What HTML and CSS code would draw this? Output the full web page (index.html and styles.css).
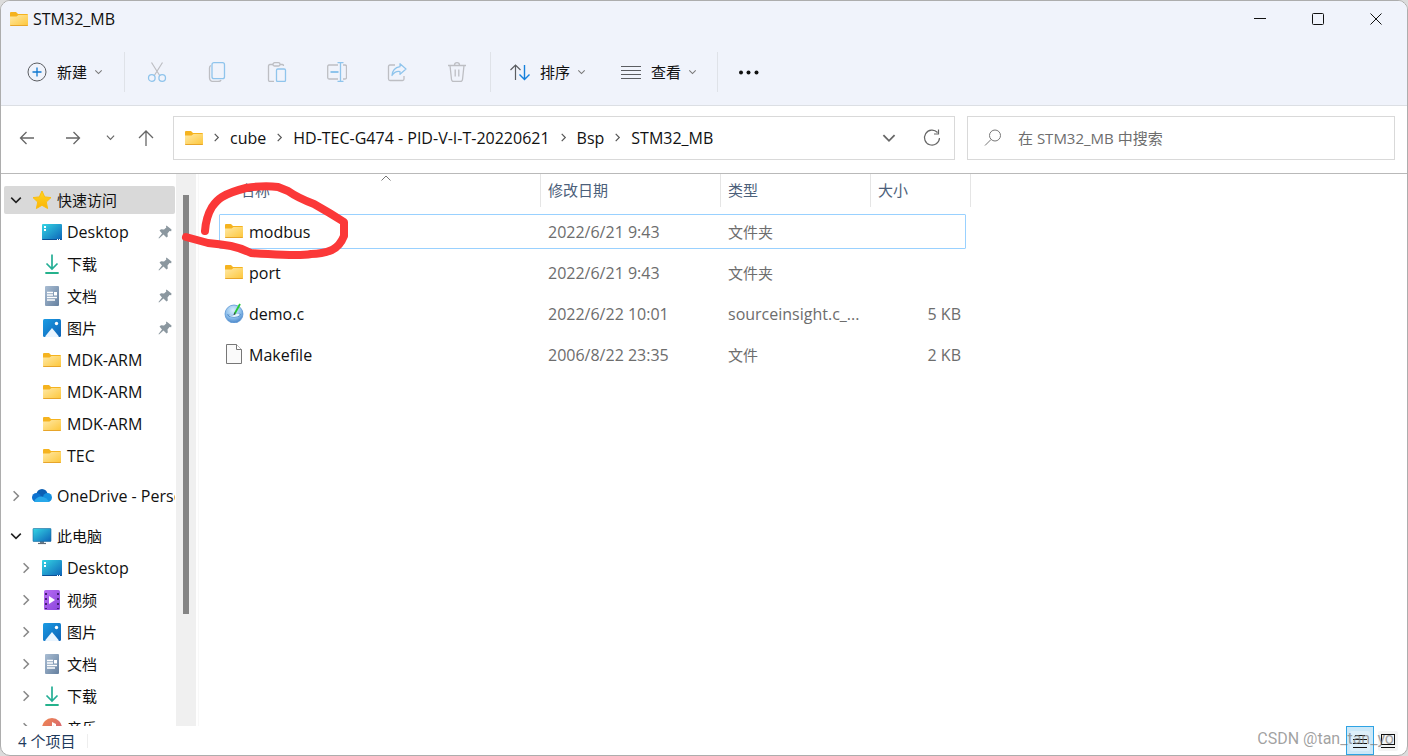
FILE: index.html
```html
<!DOCTYPE html>
<html lang="zh-CN">
<head>
<meta charset="utf-8">
<title>STM32_MB</title>
<link rel="stylesheet" href="styles.css">
</head>
<body>
<svg class="defs" aria-hidden="true">
  <defs>
    <linearGradient id="g-folder" x1="0" y1="0" x2="1" y2="1"><stop offset="0" stop-color="#ffe9a6"/><stop offset="1" stop-color="#fdc639"/></linearGradient>
    <linearGradient id="g-screen" x1="0" y1="0" x2="1" y2="1"><stop offset="0" stop-color="#35d6e4"/><stop offset="1" stop-color="#0d63b8"/></linearGradient>
    <linearGradient id="g-doc" x1="0" y1="0" x2="1" y2="1"><stop offset="0" stop-color="#a9bdd3"/><stop offset="1" stop-color="#65809f"/></linearGradient>
    <linearGradient id="g-pic" x1="0" y1="0" x2="1" y2="1"><stop offset="0" stop-color="#1b9ce4"/><stop offset="1" stop-color="#0e62b6"/></linearGradient>
    <linearGradient id="g-video" x1="0" y1="0" x2="1" y2="1"><stop offset="0" stop-color="#b76cf3"/><stop offset="1" stop-color="#8a44dc"/></linearGradient>
    <linearGradient id="g-music" x1="0" y1="0" x2="1" y2="1"><stop offset="0" stop-color="#f0894f"/><stop offset="1" stop-color="#cf5a7e"/></linearGradient>
    <linearGradient id="g-star" x1="0" y1="0" x2="0" y2="1"><stop offset="0" stop-color="#ffd61f"/><stop offset="1" stop-color="#fbb40a"/></linearGradient>
    <radialGradient id="g-ball" cx=".45" cy=".3" r=".7"><stop offset="0" stop-color="#d9eefd"/><stop offset=".6" stop-color="#8ec0ec"/><stop offset="1" stop-color="#4a86c9"/></radialGradient>
  </defs>
  <symbol id="folder" viewBox="0 0 20 20"><path d="M1 4q0-1 1-1h5l2 2h9q1 0 1 1v3H1z" fill="#f5b31f"/><path d="M1 7.500h6.500l2-1.500H19v10q0 1-1 1H2q-1 0-1-1z" fill="url(#g-folder)"/><path d="M1 16q0 1 1 1h16q1 0 1-1z" fill="#e7a52a"/></symbol>
  <symbol id="desktop" viewBox="0 0 20 20"><rect y="2" width="20" height="16" rx="1" fill="url(#g-screen)"/><path d="M0 17h20q0 1-1 1H1q-1 0-1-1z" fill="#0b4f96"/><path d="M2 4h2v2H2zM2 7h2v2H2zM15 17h1v1h-1zM17 17h1v1h-1z" fill="#fff"/></symbol>
  <symbol id="download" viewBox="0 0 20 20"><path d="M10 .5V15M4.500 9.500 10 15l5.500-5.500" fill="none" stroke="#24ae95" stroke-width="1.700"/><path d="M4 19h12" stroke="#25b28c" stroke-width="1.800" stroke-linecap="round"/></symbol>
  <symbol id="document" viewBox="0 0 20 20"><rect x="3" y="0" width="14" height="20" rx="1" fill="url(#g-doc)"/><path d="M5 6.500h6M5 9h6M5 11.500h10M5 14h8" stroke="#fff" stroke-width="1.300"/><path d="M12 6h3v3.500h-3z" fill="#fff"/></symbol>
  <symbol id="picture" viewBox="0 0 20 20"><rect x="1" y="1" width="18" height="18" rx="1.500" fill="url(#g-pic)"/><path d="M3 18.500 10 10l7 8.500q-1 .5-2 .5H5q-1 0-2-.5z" fill="#eaf5ff"/><circle cx="14.500" cy="5.500" r="1.700" fill="#fff"/></symbol>
  <symbol id="video" viewBox="0 0 20 20"><rect x="2" y="0" width="16" height="20" rx="1.500" fill="url(#g-video)"/><path d="M4 3v16M16 3v16" stroke="#472178" stroke-width="2" stroke-dasharray="2 3"/><path d="M7 6v8l6-4z" fill="#fff"/></symbol>
  <symbol id="music" viewBox="0 0 20 20"><circle cx="10" cy="10" r="10" fill="url(#g-music)"/><path d="M10 14V4l4 2v3l-2.500-1.500V14z" fill="#fff"/><circle cx="9" cy="14" r="2.500" fill="#fff"/></symbol>
  <symbol id="pc" viewBox="0 0 20 20"><path d="M8 15h4v2.500H8z" fill="#6e7f8e"/><path d="M6 17.500h8" stroke="#5f6c78" stroke-width="1.200"/><rect x="1" y="2.500" width="18" height="13" rx=".5" fill="url(#g-screen)" stroke="#1d6c9d" stroke-width=".6"/></symbol>
  <symbol id="star" viewBox="0 0 20 20"><path d="m10 1 2.700 5.900 6.300.7-4.700 4.400 1.300 6.500L10 15.300 4.400 18.500 5.700 12 1 7.600l6.300-.7z" fill="url(#g-star)" stroke="#fbbd0e" stroke-linejoin="round"/></symbol>
  <symbol id="cloud" viewBox="0 0 20 20"><circle cx="10" cy="8.500" r="5.500" fill="#0a5fb4"/><circle cx="4.500" cy="11.500" r="4.500" fill="#0d72cf"/><circle cx="15.500" cy="11.500" r="4.500" fill="#1490df"/><path d="M2 15.500Q5 10 10 10.500q4 1 7.500 5-1 .5-2 .5h-11q-1.500 0-2.500-.5z" fill="#28a8ea"/></symbol>
  <symbol id="pin" viewBox="0 0 14 14"><path d="M8.500.5 13.500 4.500l-.3 1.700-1.700-.2L9.500 8.500l.3 3L8.500 12.500 5.500 9.500 1 13.500l-.5-.5L4 8.500 1.500 5.500 3 4.300l3 .2L8.300 2.500 8 1.200z" fill="#8b979f"/></symbol>
  <symbol id="right" viewBox="0 0 10 10"><path d="m3 1 4 4-4 4" fill="none" stroke="currentColor" stroke-width="1.300"/></symbol>
  <symbol id="down" viewBox="0 0 10 10"><path d="m1 3 4 4 4-4" fill="none" stroke="currentColor" stroke-width="1.300"/></symbol>
</svg>

<div class="window">
  <header class="titlebar">
    <svg class="ico"><use href="#folder"/></svg>
    <h1 class="title">STM32_MB</h1>
    <div class="captions">
      <button class="caption" aria-label="最小化"><svg viewBox="0 0 12 12"><path d="M0 5.500h12" stroke="#111"/></svg></button>
      <button class="caption" aria-label="最大化"><svg viewBox="0 0 12 12"><rect x=".5" y=".5" width="11" height="11" rx="1" fill="none" stroke="#111"/></svg></button>
      <button class="caption" aria-label="关闭"><svg viewBox="0 0 12 12"><path d="m.5.5 11 11M11.500.5l-11 11" stroke="#111"/></svg></button>
    </div>
  </header>

  <div class="toolbar">
    <button class="tool zh"><svg class="ico" viewBox="0 0 20 20" fill="none"><circle cx="10" cy="10" r="9" stroke="#5b5d61"/><path d="M10 5.500v9M5.500 10h9" stroke="#0f78d0" stroke-width="1.300"/></svg><span>新建</span><svg class="chev"><use href="#down"/></svg></button>
    <i class="sep sep-new"></i>
    <div class="actions">
      <button class="action" aria-label="剪切" disabled><svg class="ico" viewBox="0 0 20 20" fill="none"><path d="M4.500.5 13 14M15.500.5 7 14" stroke="#bdbec3" stroke-width="1.200"/><circle cx="4.800" cy="16" r="3.300" stroke="#8fc4ec" stroke-width="1.300"/><circle cx="15.200" cy="16" r="3.300" stroke="#8fc4ec" stroke-width="1.300"/></svg></button>
      <button class="action" aria-label="复制" disabled><svg class="ico" viewBox="0 0 20 20" fill="none"><path d="M4 3.500Q2.500 4 2.500 6v9.500q0 4 4 4H11q2.500 0 3-1.500" stroke="#bdbec3" stroke-width="1.300"/><rect x="5" y=".7" width="12.500" height="16" rx="2" stroke="#8fc4ec" stroke-width="1.300"/></svg></button>
      <button class="action" aria-label="粘贴" disabled><svg class="ico" viewBox="0 0 20 20" fill="none"><path d="M6 2.500H3q-1.500 0-1.500 1.500v14q0 1.500 1.500 1.500h4M13 2.500h2.500Q16.500 2.500 16.500 4" stroke="#bdbec3" stroke-width="1.300"/><rect x="6" y=".7" width="7" height="3.300" rx="1.600" stroke="#bdbec3" stroke-width="1.300"/><rect x="9.500" y="7" width="9" height="12.500" rx="1.300" stroke="#8fc4ec" stroke-width="1.300"/></svg></button>
      <button class="action" aria-label="重命名" disabled><svg class="ico" viewBox="0 0 20 20" fill="none"><path d="M11 3H2Q.7 3 .7 4.500v11Q.7 17 2 17h9M16 3h2q1.500 0 1.500 1.500v11Q19.500 17 18 17h-2" stroke="#bdbec3" stroke-width="1.300"/><path d="M13.500.7v18.600M10.500.7h6M10.500 19.300h6" stroke="#8fc4ec" stroke-width="1.300"/><path d="M3.500 10h8" stroke="#8fc4ec" stroke-width="2"/></svg></button>
      <button class="action" aria-label="共享" disabled><svg class="ico" viewBox="0 0 20 20" fill="none"><path d="M8 3H3Q1.500 3 1.500 4.500v12.500q0 1.500 1.500 1.500h12.500q1.500 0 1.500-1.500v-3" stroke="#bdbec3" stroke-width="1.300"/><path d="m13 1.700 6 5.300-6 5.300V9.500q-5-.8-8 4Q5.500 6 13 4.700z" stroke="#8fc4ec" stroke-width="1.200" stroke-linejoin="round"/></svg></button>
      <button class="action" aria-label="删除" disabled><svg class="ico" viewBox="0 0 20 20" fill="none"><path d="M1 3.500h18M3 3.500l1.500 14q.2 2 2 2h7q1.800 0 2-2L17 3.500M7.500 3Q7.500.7 10 .7T12.500 3M8.200 7.500v7M11.800 7.500v7" stroke="#bdbec3" stroke-width="1.300"/></svg></button>
    </div>
    <i class="sep sep-edit"></i>
    <button class="tool zh"><svg class="ico" viewBox="0 0 20 20" fill="none"><path d="M5.500 18V3M.5 8l5-5 5 5" stroke="#5b5d61" stroke-width="1.200"/><path d="M14.500 3v14.500M9.500 12.500l5 5 5-5" stroke="#1480dc" stroke-width="1.400"/></svg><span>排序</span><svg class="chev"><use href="#down"/></svg></button>
    <button class="tool tool-view zh"><svg class="ico" viewBox="0 0 20 20"><path d="M0 4.500h20M0 8.500h20M0 12.500h20M0 16.500h20" stroke="#5b5d61" stroke-width="1"/></svg><span>查看</span><svg class="chev"><use href="#down"/></svg></button>
    <i class="sep sep-view"></i>
    <button class="tool" aria-label="更多"><svg class="ico" viewBox="0 0 20 20" fill="#111"><circle cx="2" cy="10.500" r="2"/><circle cx="9.500" cy="10.500" r="2"/><circle cx="17.500" cy="10.500" r="2"/></svg></button>
  </div>

  <nav class="navbar">
    <button class="nav" aria-label="返回"><svg viewBox="0 0 16 16"><path d="M15 8H1.500M7.500 2l-6 6 6 6"/></svg></button>
    <button class="nav" aria-label="前进"><svg viewBox="0 0 16 16"><path d="M1 8h13.500M8.500 2l6 6-6 6"/></svg></button>
    <button class="nav nav-recent" aria-label="最近"><svg class="chev-sm"><use href="#down"/></svg></button>
    <button class="nav nav-up" aria-label="向上"><svg viewBox="0 0 16 16"><path d="M8 16V1M1 8l7-7 7 7"/></svg></button>
    <div class="address">
      <svg class="ico"><use href="#folder"/></svg>
      <ol class="crumbs">
        <li><svg class="crumb-sep"><use href="#right"/></svg><a href="#">cube</a></li>
        <li><svg class="crumb-sep"><use href="#right"/></svg><a href="#">HD-TEC-G474 - PID-V-I-T-20220621</a></li>
        <li><svg class="crumb-sep"><use href="#right"/></svg><a href="#">Bsp</a></li>
        <li><svg class="crumb-sep"><use href="#right"/></svg><a href="#">STM32_MB</a></li>
      </ol>
      <button class="addr-btn" aria-label="历史记录"><svg class="chev-lg"><use href="#down"/></svg></button>
      <button class="addr-btn" aria-label="刷新"><svg class="refresh" viewBox="0 0 18 18"><path d="M14.500 3.500A7.500 7.500 0 1 0 16.500 9M15.500.500V5H11" fill="none" stroke="#666" stroke-width="1.200"/></svg></button>
    </div>
    <label class="search">
      <svg viewBox="0 0 18 18"><circle cx="11" cy="6.500" r="5.500" fill="none" stroke="#777"/><path d="M7 10.500 1 16.500" stroke="#777"/></svg>
      <input class="zh" type="search" aria-label="搜索" placeholder="在 STM32_MB 中搜索">
    </label>
  </nav>

  <main class="body">
    <aside class="side">
      <ul class="tree">
        <li class="row top current zh"><button class="twist open" aria-label="折叠"><svg><use href="#down"/></svg></button><svg class="ico"><use href="#star"/></svg><span>快速访问</span></li>
        <li class="row"><i class="twist"></i><svg class="ico"><use href="#desktop"/></svg><span>Desktop</span><svg class="pin"><use href="#pin"/></svg></li>
        <li class="row zh"><i class="twist"></i><svg class="ico"><use href="#download"/></svg><span>下载</span><svg class="pin"><use href="#pin"/></svg></li>
        <li class="row zh"><i class="twist"></i><svg class="ico"><use href="#document"/></svg><span>文档</span><svg class="pin"><use href="#pin"/></svg></li>
        <li class="row zh"><i class="twist"></i><svg class="ico"><use href="#picture"/></svg><span>图片</span><svg class="pin"><use href="#pin"/></svg></li>
        <li class="row"><i class="twist"></i><svg class="ico"><use href="#folder"/></svg><span>MDK-ARM</span></li>
        <li class="row"><i class="twist"></i><svg class="ico"><use href="#folder"/></svg><span>MDK-ARM</span></li>
        <li class="row"><i class="twist"></i><svg class="ico"><use href="#folder"/></svg><span>MDK-ARM</span></li>
        <li class="row"><i class="twist"></i><svg class="ico"><use href="#folder"/></svg><span>TEC</span></li>
        <li class="row top group"><button class="twist" aria-label="展开"><svg><use href="#right"/></svg></button><svg class="ico"><use href="#cloud"/></svg><span>OneDrive - Personal</span></li>
        <li class="row top group zh"><button class="twist open" aria-label="折叠"><svg><use href="#down"/></svg></button><svg class="ico"><use href="#pc"/></svg><span>此电脑</span></li>
        <li class="row"><button class="twist" aria-label="展开"><svg><use href="#right"/></svg></button><svg class="ico"><use href="#desktop"/></svg><span>Desktop</span></li>
        <li class="row zh"><button class="twist" aria-label="展开"><svg><use href="#right"/></svg></button><svg class="ico"><use href="#video"/></svg><span>视频</span></li>
        <li class="row zh"><button class="twist" aria-label="展开"><svg><use href="#right"/></svg></button><svg class="ico"><use href="#picture"/></svg><span>图片</span></li>
        <li class="row zh"><button class="twist" aria-label="展开"><svg><use href="#right"/></svg></button><svg class="ico"><use href="#document"/></svg><span>文档</span></li>
        <li class="row zh"><button class="twist" aria-label="展开"><svg><use href="#right"/></svg></button><svg class="ico"><use href="#download"/></svg><span>下载</span></li>
        <li class="row zh"><button class="twist" aria-label="展开"><svg><use href="#right"/></svg></button><svg class="ico"><use href="#music"/></svg><span>音乐</span></li>
      </ul>
      <div class="scroll"><div class="thumb"></div></div>
    </aside>

    <section class="files">
      <table class="list">
        <thead>
          <tr class="line head zh"><th><svg class="sort" viewBox="0 0 10 6"><path d="m.5 5.500 4.500-4.500 4.500 4.500" fill="none" stroke="#777"/></svg>名称</th><th>修改日期</th><th>类型</th><th>大小</th></tr>
        </thead>
        <tbody>
          <tr class="line file focused"><td class="name"><svg class="ico"><use href="#folder"/></svg>modbus</td><td>2022/6/21 9:43</td><td class="zh">文件夹</td><td class="size"></td></tr>
          <tr class="line file"><td class="name"><svg class="ico"><use href="#folder"/></svg>port</td><td>2022/6/21 9:43</td><td class="zh">文件夹</td><td class="size"></td></tr>
          <tr class="line file"><td class="name"><svg class="ico" viewBox="0 0 20 20"><circle cx="10" cy="11" r="9" fill="url(#g-ball)" stroke="#5d97d4" stroke-width=".8"/><path d="M3 11q4 2 7 .500t7-.5q-1 3.500-7 3.500T3 11z" fill="#4d88c6"/><path d="M4 11.500q4 2 7 0t5 .500q-2 2-6 2t-6-2.500z" fill="#e4f3fd"/><path d="m10.500 11 5.500-10" stroke="#26c834" stroke-width="1.800"/><path d="m10 12 1-2.500" stroke="#444"/></svg>demo.c</td><td>2022/6/22 10:01</td><td>sourceinsight.c_...</td><td class="size">5 KB</td></tr>
          <tr class="line file"><td class="name"><svg class="ico" viewBox="0 0 20 20"><path d="M2.500.5h10l5 5v14h-15z" fill="#fafafa" stroke="#777"/><path d="M12.500.5v5h5" fill="#fff" stroke="#777"/></svg>Makefile</td><td>2006/8/22 23:35</td><td class="zh">文件</td><td class="size">2 KB</td></tr>
        </tbody>
      </table>
    </section>

    <svg class="mark" viewBox="0 0 170 80" aria-hidden="true"><path d="M24 51Q25 37 31 27q5-7 10-10 8-5 24-9 18-3 32-1l10 4q10 7 26 13 16 9 30 18v14q-4 10-12 14-10 4-21 4-10 2-43 0-9 0-17-1-10-5-20-7-12-2-23-3L5 57"/></svg>
  </main>

  <footer class="status">
    <span class="count zh">4 个项目</span>
    <div class="views">
      <button class="view active" aria-label="详细信息"><svg viewBox="0 0 20 20"><rect width="20" height="20" rx="2" fill="#ddeffa"/><path d="M5 4.500h10M3 8.500h14M3 12.500h14M3 16.500h14" stroke="#111"/></svg></button>
      <button class="view" aria-label="大图标"><svg viewBox="0 0 20 20"><rect width="20" height="20" rx="2" fill="#f4f4f4"/><rect x="3.500" y="3.500" width="13" height="10" fill="none" stroke="#111"/><path d="M3 16.500h14" stroke="#111"/></svg></button>
    </div>
    <span class="watermark">CSDN @tan_tan_yo</span>
  </footer>
</div>
</body>
</html>
```
FILE: styles.css
```css
* { box-sizing: border-box; }

body {
  margin: 0;
  background: #dcdcdc;
  color: #111;
  font: 16px/20px "Open Sans", "Noto Sans CJK SC", sans-serif;
}

button { padding: 0; border: 0; background: none; color: inherit; font: inherit; }
svg { display: block; flex: none; }
ul, ol { margin: 0; padding: 0; list-style: none; }
.defs { position: absolute; width: 0; height: 0; }
.ico { width: 20px; height: 20px; }
.zh { font-size: 15px; }

.window {
  display: flex;
  flex-direction: column;
  height: 100vh;
  border: 1px solid #adadad;
  border-radius: 10px;
  background: #fff;
  overflow: hidden;
}

.titlebar { display: flex; align-items: center; height: 38px; padding: 0 2px 2px 8px; background: #f0f3fb; }
.title { margin: 0 0 0 4px; font-size: 16px; font-weight: 400; }
.captions { display: flex; margin-left: auto; }
.caption { display: grid; place-items: center; width: 58px; height: 36px; }
.caption svg { width: 12px; height: 12px; }

.toolbar {
  display: flex;
  align-items: center;
  height: 67px;
  padding-left: 26px;
  border-bottom: 1px solid #dcdfe4;
  background: #f0f3fb;
}
.tool { display: flex; align-items: center; }
.tool span { margin: 0 7px 0 10px; }
.tool-view { margin-left: 35px; }
.chev { width: 9px; height: 8px; color: #777; }
.sep { width: 1px; height: 40px; background: #dfe2e8; }
.sep-new { margin: 0 2px 0 21px; }
.sep-edit { margin: 0 19px 0 3px; }
.sep-view { margin: 0 21px 0 20px; }
.actions { display: flex; }
.action { display: grid; place-items: center; width: 60px; height: 40px; }

.navbar { display: flex; align-items: center; height: 68px; padding: 0 12px 4px 3px; border-bottom: 1px solid #b9b9b9; }
.nav { display: grid; place-items: center; width: 46px; height: 44px; color: #666; }
.nav svg { width: 16px; height: 16px; fill: none; stroke: #666; stroke-width: 1.3; }
.nav-recent { width: 28px; }
.nav .chev-sm { width: 9px; height: 9px; }
.nav-up { width: 44px; margin-right: 5px; }
.address {
  display: flex;
  flex: 1;
  align-items: center;
  height: 44px;
  min-width: 0;
  margin-right: 12px;
  padding: 0 1px 0 10px;
  border: 1px solid #d9d9d9;
}
.crumbs { display: flex; flex: 1; }
.crumbs li { display: flex; align-items: center; }
.crumb-sep { width: 9px; height: 9px; margin: 0 9px 0 8px; color: #555; }
.crumbs li:not(:first-child) .crumb-sep { margin: 0 9px; }
.crumbs a { color: inherit; text-decoration: none; white-space: nowrap; }
.addr-btn { display: grid; place-items: center; width: 43px; height: 42px; color: #666; }
.chev-lg { width: 14px; height: 14px; }
.refresh { width: 18px; height: 18px; }
.search { display: flex; flex: 0 1 428px; align-items: center; height: 44px; padding-left: 16px; border: 1px solid #d9d9d9; }
.search svg { width: 18px; height: 18px; }
.search input { flex: 1; min-width: 0; margin-left: 16px; padding: 0; border: 0; outline: 0; background: none; color: #111; font-family: inherit; }
.search input::placeholder { color: #6d6d6d; opacity: 1; }

.body { position: relative; display: flex; flex: 1; min-height: 0; }
.side { display: flex; width: 195px; overflow: hidden; }
.tree { width: 175px; padding: 10px 1px 0 3px; overflow: hidden; }
.row { display: flex; align-items: center; height: 32px; padding-left: 12px; overflow: hidden; white-space: nowrap; }
.row span { margin-left: 5px; }
.top { padding-left: 2px; }
.current { height: 28px; margin: 2px 0; border-radius: 2px; background: #d9d9d9; }
.group { margin-top: 8px; }
.twist { display: grid; flex: none; place-items: center; width: 20px; height: 20px; margin-right: 6px; color: #888; }
.twist svg { width: 12px; height: 12px; }
.twist.open { color: #222; }
.pin { width: 14px; height: 14px; margin: 0 3px 0 auto; }
.scroll { width: 20px; padding: 21px 7px 112px; background: #f0f0f0; }
.thumb { width: 6px; height: 100%; background: #858585; }

.files { flex: 1; margin-left: 2px; padding-left: 20px; border-left: 1px solid #f8f8f8; }
.list { display: block; width: 752px; }
.list thead, .list tbody { display: block; }
.line { display: grid; grid-template-columns: 320px 180px 150px 1fr; border: 1px solid transparent; }
.head { height: 33px; margin-bottom: 7px; border-width: 0 0 0 1px; }
.head th { position: relative; padding: 6px 0 0 7px; border-left: 1px solid #e5e5e5; color: #4c607a; font-weight: 400; text-align: left; }
.head th:first-child { padding-left: 19px; border-left-color: transparent; }
.head th:last-child { border-right: 1px solid #e5e5e5; }
.sort { position: absolute; top: 1px; left: 50%; width: 10px; height: 6px; }
.file { align-items: center; width: 747px; height: 35px; margin-bottom: 6px; color: #6d6d6d; }
.file td { padding: 0 0 0 8px; white-space: nowrap; }
.file .name { display: flex; align-items: center; gap: 5px; padding-left: 4px; color: #111; }
.name .ico { margin-bottom: 2px; }
.file .size { padding: 0 4px 0 0; text-align: right; }
.focused { border-color: #99d1ff; border-radius: 1px; }

.mark { position: absolute; top: 6px; left: 180px; width: 170px; height: 80px; fill: none; stroke: #fb3838; stroke-width: 8; stroke-linecap: round; stroke-linejoin: round; }

.status { position: relative; display: flex; align-items: center; height: 29px; padding: 0 9px 0 17px; color: #1e3a5c; }
.count { padding-right: 12px; border-right: 1px solid #eee; line-height: 14px; }
.views { display: flex; gap: 4px; margin-left: auto; }
.view { display: grid; place-items: center; width: 20px; height: 29px; }
.view svg { width: 20px; height: 20px; }
.view.active { width: 28px; border: 1px solid #2ea3e4; background: #cce8f8; }
.watermark { position: absolute; right: 13px; bottom: 6px; color: rgba(120, 120, 120, .7); font: 16px/20px Roboto, sans-serif; }
```
